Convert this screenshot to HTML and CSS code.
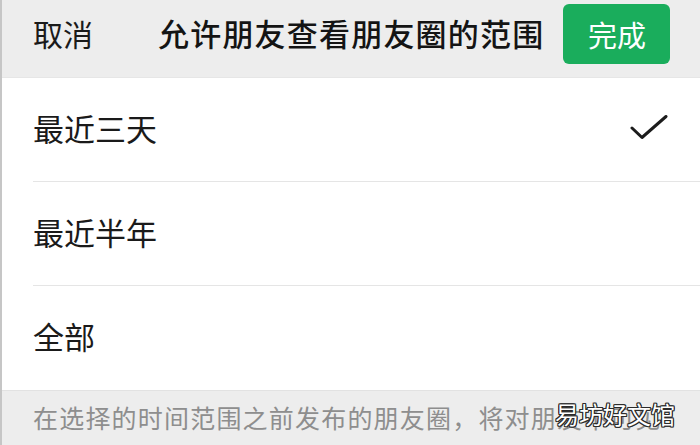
FILE: index.html
```html
<!DOCTYPE html>
<html lang="zh-CN">
<head>
<meta charset="utf-8">
<link rel="stylesheet" href="styles.css">
</head>
<body>
<div class="page">
  <header class="header">
    <span class="cancel">取消</span>
    <span class="title">允许朋友查看朋友圈的范围</span>
    <span class="done">完成</span>
  </header>
  <ul class="list">
    <li class="row">
      <span class="label">最近三天</span>
      <svg class="check" width="38" height="28" viewBox="0 0 38 28">
        <path d="M2 13 L12 22.5 L36 1.5" fill="none" stroke="#1c1c1c" stroke-width="3" stroke-linecap="round" stroke-linejoin="round"/>
      </svg>
    </li>
    <li class="row">
      <span class="label">最近半年</span>
    </li>
    <li class="row last">
      <span class="label">全部</span>
    </li>
  </ul>
  <footer class="footer">
    <p class="note">在选择的时间范围之前发布的朋友圈，将对朋友不可见</p>
    <span class="watermark">易坊好文馆</span>
  </footer>
</div>
</body>
</html>
```
FILE: styles.css
```css
html, body {
  margin: 0;
  padding: 0;
  background: #ffffff;
}
body {
  font-family: "Noto Sans CJK SC", "Noto Sans", sans-serif;
  width: 700px;
  height: 445px;
  overflow: hidden;
}
.page {
  position: relative;
  width: 698px;
  height: 445px;
  border-left: 2px solid #c6c6c6;
  background: #ffffff;
  overflow: hidden;
}
.header {
  display: flex;
  align-items: center;
  height: 77px;
  padding-left: 31px;
  background: #ededed;
  border-bottom: 1px solid #e6e6e6;
  box-sizing: content-box;
}
.cancel {
  font-size: 30px;
  color: #1a1a1a;
  line-height: 1;
  width: 60px;
  margin-bottom: 12px;
}
.title {
  margin-left: 65px;
  margin-bottom: 12px;
  font-size: 31px;
  font-weight: 500;
  letter-spacing: 1.2px;
  color: #141414;
  line-height: 1;
  white-space: nowrap;
}
.done {
  margin-left: 19px;
  width: 107px;
  height: 60px;
  margin-bottom: 9px;
  display: flex;
  align-items: center;
  justify-content: center;
  background: #1aad5c;
  color: #ffffff;
  font-size: 29px;
  border-radius: 6px;
  line-height: 1;
}
.list {
  list-style: none;
  margin: 0;
  padding: 0 0 0 31px;
}
.row {
  display: flex;
  align-items: center;
  justify-content: space-between;
  height: 103px;
  border-bottom: 1px solid #e5e5e5;
  padding-right: 32px;
}
.row.last {
  border-bottom: none;
  height: 104px;
}
.label {
  font-size: 31px;
  color: #1a1a1a;
  line-height: 1;
  margin-bottom: 5px;
}
.check {
  display: block;
  margin-top: -2px;
}
.footer {
  position: relative;
  height: 60px;
  background: #ededed;
  border-top: 1px solid #e2e2e2;
  padding-left: 31px;
}
.note {
  margin: 0;
  padding-top: 9px;
  font-size: 25px;
  letter-spacing: 1.2px;
  color: #8e8e8e;
  white-space: nowrap;
  line-height: 34px;
}
.watermark {
  position: absolute;
  left: 553px;
  top: 8px;
  font-size: 24px;
  line-height: 30px;
  color: #ffffff;
  white-space: nowrap;
  text-shadow:
    -1px -1px 0 #2a2a2a, 1px -1px 0 #2a2a2a,
    -1px 1px 0 #2a2a2a, 1px 1px 0 #2a2a2a,
    0 -1px 0 #2a2a2a, 0 1px 0 #2a2a2a,
    -1px 0 0 #2a2a2a, 1px 0 0 #2a2a2a;
}
```
